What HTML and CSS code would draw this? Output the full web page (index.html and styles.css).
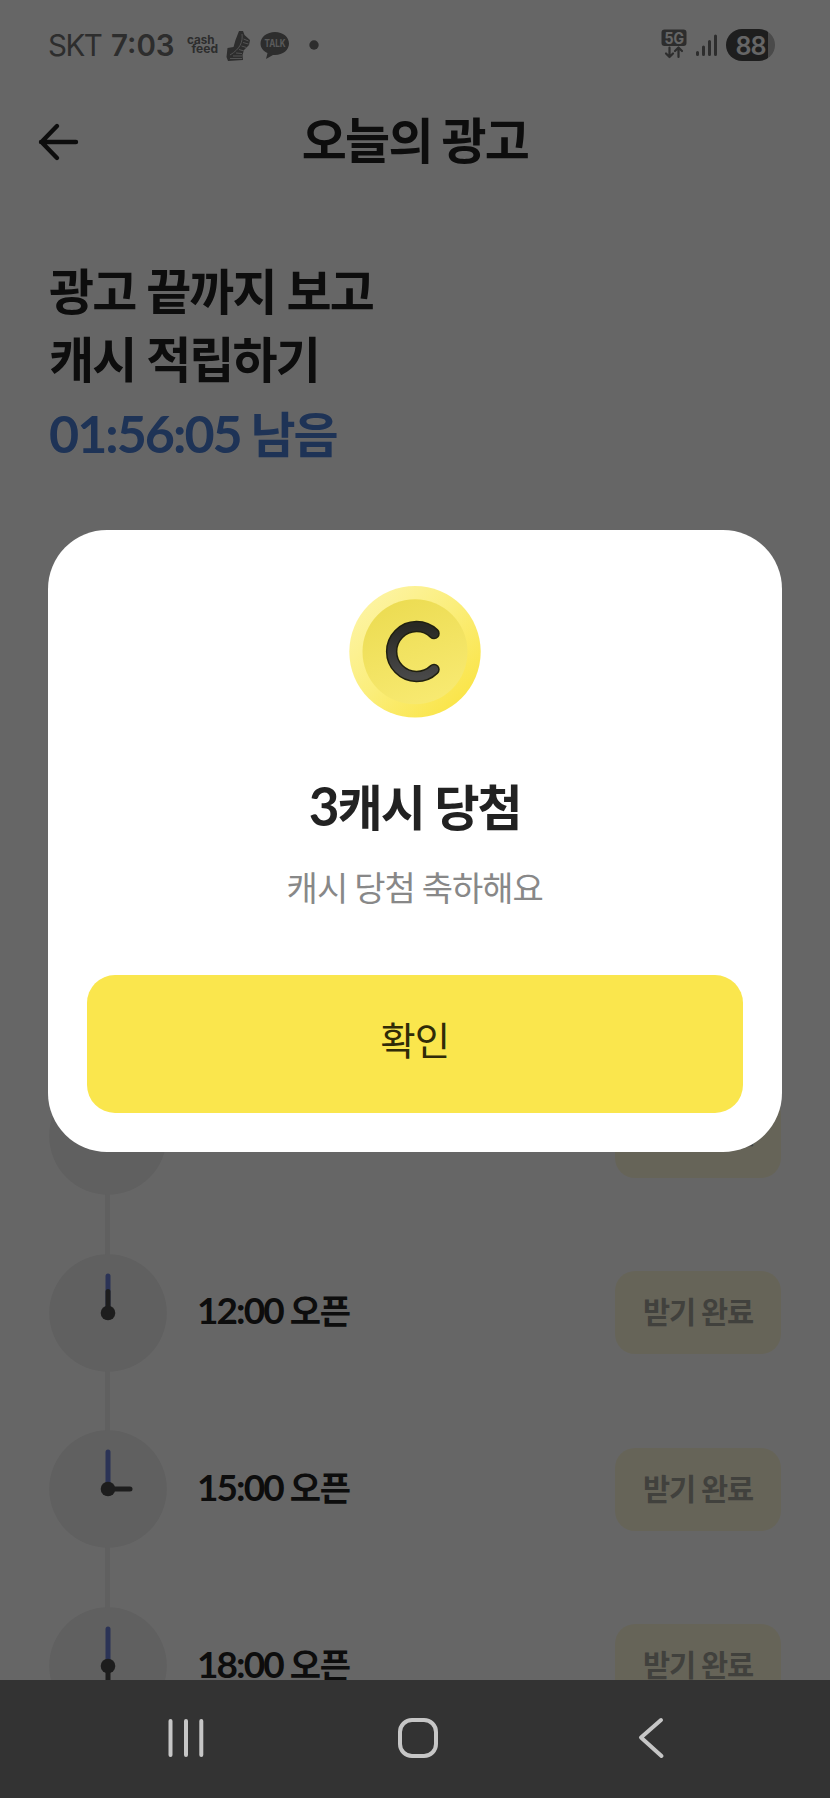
FILE: index.html
```html
<!DOCTYPE html>
<html lang="ko">
<head>
<meta charset="utf-8">
<title>오늘의 광고</title>
<link rel="stylesheet" href="styles.css">
</head>
<body>
<div class="phone">
  <main class="app">
    <div class="status">
      <span class="carrier">SKT</span>
      <span class="clock">7:03</span>
      <svg class="notices" width="140" height="36" viewBox="0 0 140 36">
        <g class="cashfeed"><text x="0" y="16.500" textLength="27.500" lengthAdjust="spacingAndGlyphs">cash</text><text x="4.500" y="25.500" textLength="26.500" lengthAdjust="spacingAndGlyphs">feed</text></g>
        <path class="shoe" d="M52 4h4l1.500 4 5.500 5-1 5-5 5-1.500 5 .5 5-15 1-1.500-4 1-9 6-1 2-7z"/>
        <path class="shoe-lines" d="M55 7c1 8-2 15-12 21M56.500 12l5 2M56 15.500l5.500 1.500M54.500 19l5 1.500M52 22.500l5 1.500M49 26l6 .5M46 29h9M43 31.500h12"/>
        <path class="bubble" d="M88 5c8 0 14 5 14 11.500S96 28 88 28l-2 0-7 4 1.500-6C76 24 73.500 20.500 73.500 16.500 73.500 10 80 5 88 5z"/>
        <text class="talk" x="77.500" y="20.300" textLength="21" lengthAdjust="spacingAndGlyphs">TALK</text>
        <circle class="dot" cx="127" cy="18" r="4.700"/>
      </svg>
      <svg class="signal" width="60" height="36" viewBox="0 0 60 36">
        <rect class="fill" x="1.500" y="2.500" width="25" height="16.500" rx="3"/>
        <text class="five-g" x="4.500" y="16.500" textLength="19.500" lengthAdjust="spacingAndGlyphs">5G</text>
        <path class="arrows" d="M9.500 20.500v9.500M6 26.500l3.500 3.500 3.500-3.500M18.500 30v-9.500M15 24l3.500-3.500 3.500 3.500"/>
        <path class="bars" d="M37.500 25.500v2M43.500 20v7.500M49.500 14.500v13M55.500 9v18.500"/>
      </svg>
      <span class="battery">88</span>
    </div>
    <header class="topbar">
      <svg class="back" width="42" height="40" viewBox="0 0 42 40"><path d="M19 4L3.500 20 19 36M3 20h35"/></svg>
      <h1 class="title">오늘의 광고</h1>
    </header>
    <section class="hero">
      <p class="headline">광고 끝까지 보고</p>
      <p class="headline">캐시 적립하기</p>
      <p class="timer"><span class="digits">01:56:05</span> 남음</p>
    </section>
    <ul class="slots">
      <li class="slot">
        <svg class="dial" width="118" height="118" viewBox="0 0 118 118"><circle class="face" cx="59" cy="59" r="58.800"/></svg>
        <span class="open"><span class="digits">09:00</span> 오픈</span>
        <span class="done">받기 완료</span>
      </li>
      <li class="slot">
        <svg class="dial" width="118" height="118" viewBox="0 0 118 118"><circle class="face" cx="59" cy="59" r="58.800"/><path class="minute" d="M59 59V22"/><path class="hour" d="M59 59V37.500"/><circle class="hub" cx="59" cy="59" r="7.300"/></svg>
        <span class="open"><span class="digits">12:00</span> 오픈</span>
        <span class="done">받기 완료</span>
      </li>
      <li class="slot">
        <svg class="dial" width="118" height="118" viewBox="0 0 118 118"><circle class="face" cx="59" cy="59" r="58.800"/><path class="minute" d="M59 59V22"/><path class="hour" d="M59 59H81"/><circle class="hub" cx="59" cy="59" r="7.300"/></svg>
        <span class="open"><span class="digits">15:00</span> 오픈</span>
        <span class="done">받기 완료</span>
      </li>
      <li class="slot">
        <svg class="dial" width="118" height="118" viewBox="0 0 118 118"><circle class="face" cx="59" cy="59" r="58.800"/><path class="minute" d="M59 59V22"/><path class="hour" d="M59 59V81"/><circle class="hub" cx="59" cy="59" r="7.300"/></svg>
        <span class="open"><span class="digits">18:00</span> 오픈</span>
        <span class="done">받기 완료</span>
      </li>
    </ul>
  </main>
  <div class="scrim">
    <section class="modal">
      <svg class="coin" width="134" height="134" viewBox="0 0 134 134">
        <defs>
          <linearGradient id="rim" x1=".1" y1=".1" x2=".85" y2=".85"><stop offset="0" stop-color="#fdf4a4"/><stop offset=".5" stop-color="#fbee7c"/><stop offset="1" stop-color="#fae54b"/></linearGradient>
          <linearGradient id="core" x1=".3" y1="0" x2=".7" y2="1"><stop offset="0" stop-color="#ecdc52"/><stop offset="1" stop-color="#f8ea72"/></linearGradient>
          <linearGradient id="ink" x1="0" y1="0" x2="0" y2="1"><stop offset="0" stop-color="#292924"/><stop offset="1" stop-color="#484848"/></linearGradient>
        </defs>
        <circle cx="67" cy="65.800" r="65.700" fill="url(#rim)"/>
        <circle cx="67" cy="65.800" r="52.500" fill="url(#core)"/>
        <path d="M86 47.500A25 25 0 1 0 86 83.500" fill="none" stroke="#20200f" stroke-width="11.500" stroke-linecap="round"/>
        <path d="M86 47.500A25 25 0 1 0 86 83.500" fill="none" stroke="url(#ink)" stroke-width="8.500" stroke-linecap="round"/>
      </svg>
      <h2 class="prize"><span class="digits">3</span>캐시 당첨</h2>
      <p class="message">캐시 당첨 축하해요</p>
      <button class="confirm">확인</button>
    </section>
  </div>
  <nav class="nav">
    <svg width="46" height="46" viewBox="0 0 46 46"><path d="M7.500 6v34M23 6v34M38.300 6v34"/></svg>
    <svg width="46" height="46" viewBox="0 0 46 46"><rect x="4" y="5" width="36" height="36" rx="12"/></svg>
    <svg width="46" height="46" viewBox="0 0 46 46"><path d="M32 5L12 22.500l20.500 18.500"/></svg>
  </nav>
</div>
</body>
</html>
```
FILE: styles.css
```css
* { box-sizing: border-box; margin: 0; padding: 0; }
body { background: #333; font-family: "Noto Sans CJK KR", sans-serif; color: #222; }
.phone { position: relative; width: 830px; height: 1798px; overflow: hidden; }
.app { height: 1680px; background: #fff; overflow: hidden; }
.digits { font-family: Lato, sans-serif; }

.status { display: flex; align-items: center; height: 90px; padding: 0 55px 0 48px; font-family: Inter, sans-serif; color: #707070; }
.carrier { font-size: 29.500px; letter-spacing: -1.5px; width: 63px; }
.clock { font-size: 29.500px; font-weight: 600; width: 76px; }
.cashfeed text { font: 700 12px Inter, sans-serif; fill: #707070; }
.shoe, .bubble, .dot, .fill { fill: #707070; }
.shoe-lines { fill: none; stroke: #d0d0d0; stroke-width: 1; }
.talk { font: 700 10.500px Inter, sans-serif; fill: #e0e0e0; }
.signal { margin-left: auto; }
.five-g { font: 700 15.500px Inter, sans-serif; fill: #fff; }
.arrows, .bars { fill: none; stroke: #707070; stroke-width: 2.200; stroke-linecap: round; stroke-linejoin: round; }
.bars { stroke-width: 3; }
.battery { width: 49px; height: 32.500px; margin-left: 6px; border-radius: 17px; background: linear-gradient(90deg, #4c4c4c 42px, #b8b8b8 42px); color: #fff; font-size: 25px; font-weight: 600; line-height: 34px; text-align: center; letter-spacing: -1px; }

.topbar { display: grid; grid-template-columns: 80px 1fr 80px; align-items: center; height: 100px; }
.back { margin-left: 38px; margin-top: 4px; }
.back path { fill: none; stroke: #222; stroke-width: 4.400; stroke-linecap: round; stroke-linejoin: round; }
.title { margin-top: -4px; font-size: 49px; font-weight: 700; line-height: 70px; letter-spacing: -1.8px; word-spacing: -2px; text-align: center; white-space: nowrap; }

.hero { padding: 65px 0 0 49px; height: 827px; font-size: 49px; font-weight: 700; letter-spacing: -1.9px; word-spacing: -1px; }
.headline { line-height: 68px; }
.timer { margin-top: 4px; line-height: 74px; color: #4c80d8; letter-spacing: -2px; word-spacing: -2px; }
.timer .digits { font-size: 52px; }

.slots { list-style: none; padding: 60px 49px 0; background: linear-gradient(#efefef, #efefef) 105px 60px / 5px 100% no-repeat; }
.slot { display: flex; align-items: center; height: 118px; margin-bottom: 58.700px; }
.dial { flex: none; }
.face { fill: #efefef; }
.minute, .hour { fill: none; stroke-width: 5; stroke-linecap: round; }
.minute { stroke: #6c80d8; }
.hour { stroke: #4a4a4a; }
.hub { fill: #4a4a4a; }
.open { margin: -6px 0 0 30px; flex: 1; font-size: 34px; font-weight: 700; letter-spacing: -1.200px; word-spacing: -1.500px; }
.open .digits { font-size: 37px; letter-spacing: -1.900px; }
.done { width: 166px; height: 83.500px; border-radius: 20px; background: #fffadd; color: #a3a29a; font-size: 29.500px; font-weight: 700; line-height: 78px; text-align: center; letter-spacing: -1.200px; word-spacing: -1px; }

.scrim { position: absolute; inset: 0 0 118px; background: rgba(0, 0, 0, .6); padding: 529.500px 48px 0 47.500px; }
.modal { display: flex; flex-direction: column; align-items: center; height: 622px; padding: 56px 39px 39px; border-radius: 59px; background: #fff; }
.prize { margin-top: 50px; font-size: 49px; line-height: 70px; font-weight: 700; letter-spacing: -2px; word-spacing: -1px; }
.prize .digits { font-size: 53px; }
.message { margin-top: 21px; font-size: 34px; line-height: 50px; color: #888; letter-spacing: -1px; word-spacing: -1.500px; }
.confirm { margin-top: auto; width: 100%; height: 137.500px; padding-bottom: 11px; border: 0; border-radius: 28px; background: #fae64d; color: #302b08; font: 400 38.500px "Noto Sans CJK KR", sans-serif; letter-spacing: -.8px; }

.nav { display: grid; grid-template-columns: repeat(3, 46px); gap: 187px; height: 118px; padding: 35px 0 0 163px; background: #333; }
.nav path, .nav rect { fill: none; stroke: #c6c6c6; stroke-width: 4; stroke-linecap: round; stroke-linejoin: round; }
```
